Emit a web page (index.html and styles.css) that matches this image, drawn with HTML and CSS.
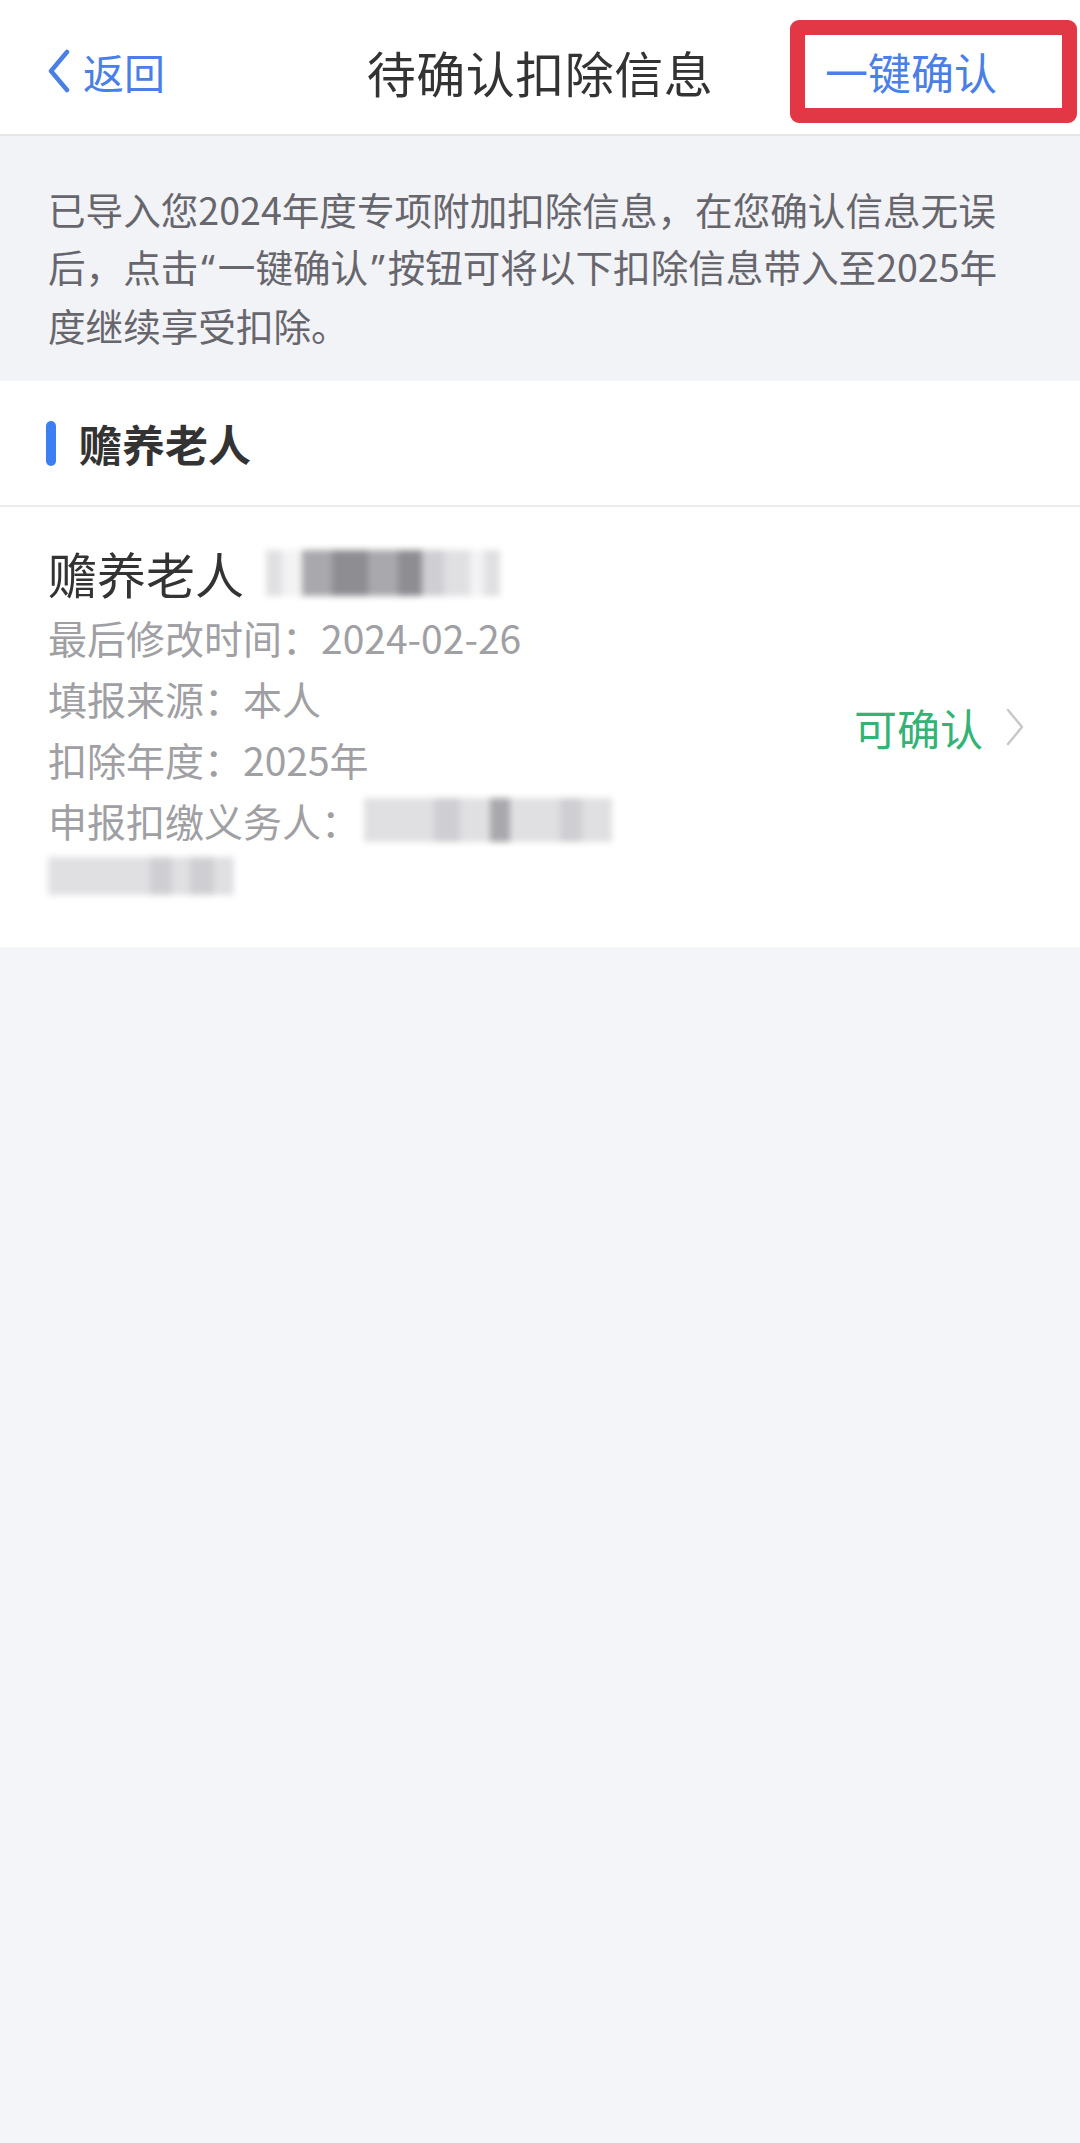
FILE: index.html
```html
<!DOCTYPE html>
<html lang="zh-CN">
<head>
<meta charset="utf-8">
<title>待确认扣除信息</title>
<link rel="stylesheet" href="styles.css">
</head>
<body>
<header class="nav">
  <div class="nav-back">
    <svg class="back-icon" viewBox="0 0 24 44" width="24" height="44"><path d="M20 3 L4 22 L20 41" fill="none" stroke="#4a80e6" stroke-width="4.5" stroke-linecap="round" stroke-linejoin="round"/></svg>
    <span>返回</span>
  </div>
  <div class="nav-title">待确认扣除信息</div>
  <div class="nav-action"><span>一键确认</span></div>
</header>

<section class="notice">
  <p>已导入您2024年度专项附加扣除信息，在您确认信息无误<br>后，点击<span class="q">“</span>一键确认<span class="q">”</span>按钮可将以下扣除信息带入至2025年<br>度继续享受扣除。</p>
</section>

<section class="group-head">
  <span class="bar"></span>
  <span class="group-title">赡养老人</span>
</section>

<section class="card">
  <div class="card-main">
    <div class="card-title">
      <span>赡养老人</span>
      <span class="mosaic mosaic-name">
        <i class="c1 w16"></i><i class="c0 w20"></i><i class="c3 w30"></i><i class="c4 w36"></i><i class="c3 w30"></i><i class="c4 w24"></i><i class="c2 w22"></i><i class="c1 w26"></i><i class="c0 w14"></i><i class="c1 w16"></i>
      </span>
    </div>
    <div class="row">最后修改时间：2024-02-26</div>
    <div class="row">填报来源：本人</div>
    <div class="row">扣除年度：2025年</div>
    <div class="row">申报扣缴义务人：<span class="mosaic mosaic-org"><i class="c1 w40"></i><i class="c1 w30"></i><i class="c2 w26"></i><i class="c1 w30"></i><i class="c3 w20"></i><i class="c1 w26"></i><i class="c1 w24"></i><i class="c2 w22"></i><i class="c1 w30"></i></span></div>
    <div class="row-blur"><span class="mosaic mosaic-org2"><i class="c1 w40"></i><i class="c1 w36"></i><i class="c1 w26"></i><i class="c2 w22"></i><i class="c1 w18"></i><i class="c2 w24"></i><i class="c1 w20"></i></span></div>
  </div>
  <div class="card-status">
    <span>可确认</span>
    <svg class="chev" viewBox="0 0 20 40" width="20" height="40"><path d="M3 3 L17 20 L3 37" fill="none" stroke="#c8c8cc" stroke-width="2.5" stroke-linecap="round" stroke-linejoin="round"/></svg>
  </div>
</section>
</body>
</html>
```

FILE: styles.css
```css
* { box-sizing: border-box; }
html, body { margin: 0; padding: 0; }
body {
  width: 1080px;
  min-height: 2143px;
  background: #f4f5f9;
  font-family: "Noto Sans CJK SC", "Noto Sans", sans-serif;
  color: #333;
}

.nav {
  height: 136px;
  background: #fff;
  border-bottom: 2px solid #e6e6ea;
  display: grid;
  grid-template-columns: 1fr auto 1fr;
  align-items: center;
  padding: 8px 3px 0 3px;
}
.nav-back {
  display: flex;
  align-items: center;
  gap: 12px;
  padding-left: 44px;
  color: #4a80e6;
  font-size: 41px;
  line-height: 1;
}
.back-icon { display: block; }
.nav-title {
  font-size: 49px;
  color: #333;
  letter-spacing: 0.5px;
}
.nav-action {
  justify-self: end;
  width: 287px;
  height: 103px;
  border: 15px solid #e23846;
  border-radius: 9px;
  display: flex;
  align-items: center;
  padding-left: 20px;
  color: #4a80e6;
  font-size: 43px;
  line-height: 1;
}

.notice {
  background: #f2f3f7;
  padding: 44px 48px 28px;
}
.notice p {
  margin: 0;
  font-size: 37.6px;
  line-height: 57px;
  color: #66666c;
}
.q { font-family: "Noto Sans", sans-serif; padding: 0 3px; }

.group-head {
  background: #fff;
  height: 126px;
  border-bottom: 2px solid #ececf0;
  display: flex;
  align-items: center;
  padding-left: 46px;
  gap: 23px;
}
.bar {
  width: 10px;
  height: 45px;
  border-radius: 5px;
  background: #3c7ff2;
}
.group-title {
  font-size: 43px;
  font-weight: 700;
  color: #333;
}

.card {
  background: #fff;
  height: 440px;
  display: flex;
  align-items: center;
  justify-content: space-between;
  padding: 0 55px 0 48px;
}
.card-main {
  padding-bottom: 16px;
}
.card-title {
  display: flex;
  align-items: center;
  font-size: 49px;
  line-height: 68px;
  color: #333;
}
.row {
  display: flex;
  align-items: center;
  font-size: 39px;
  line-height: 61px;
  color: #a0a0a4;
}
.row-blur { padding-top: 6px; }

.mosaic {
  display: inline-flex;
  filter: blur(3px);
}
.mosaic i { display: block; }
.mosaic-name { margin-left: 22px; height: 46px; }
.mosaic-name i { height: 46px; }
.mosaic-org { margin-left: 4px; height: 44px; }
.mosaic-org i { height: 44px; }
.mosaic-org2 { height: 38px; }
.mosaic-org2 i { height: 38px; }
.c0 { background: #f3f3f4; }
.c1 { background: #e0e0e3; }
.c2 { background: #cfcfd3; }
.c3 { background: #a9a9ad; }
.c4 { background: #8e8e92; }
.w14 { width: 14px; } .w16 { width: 16px; } .w18 { width: 18px; } .w20 { width: 20px; }
.w22 { width: 22px; } .w24 { width: 24px; } .w26 { width: 26px; } .w30 { width: 30px; }
.w36 { width: 36px; } .w40 { width: 40px; }

.card-status {
  display: flex;
  align-items: center;
  gap: 22px;
  color: #33b376;
  font-size: 43px;
}
.chev { display: block; }
```
